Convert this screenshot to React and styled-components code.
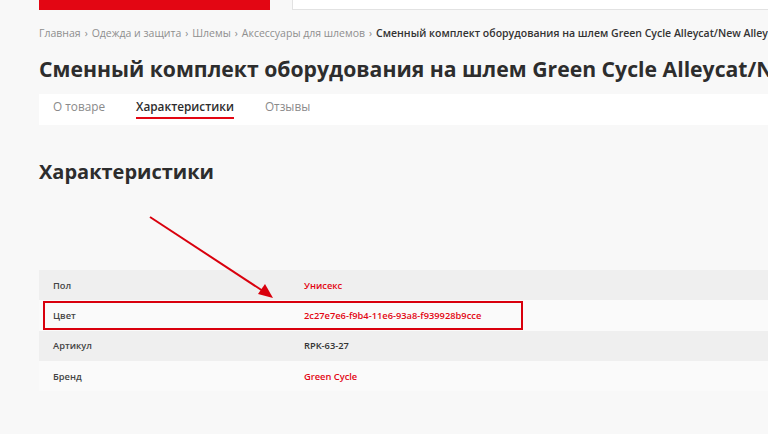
import React from "react";
import styled, { createGlobalStyle } from "styled-components";

const GlobalStyle = createGlobalStyle`
  html, body {
    margin: 0;
    padding: 0;
    background: #f8f8f8;
    overflow: hidden;
  }
  body {
    font-family: "Open Sans", "Liberation Sans", sans-serif;
    color: #333;
  }
`;

const Page = styled.div`
  position: relative;
  width: 768px;
  height: 434px;
  padding-left: 39px;
  box-sizing: border-box;
  overflow: hidden;
`;

const Header = styled.div`
  display: flex;
  gap: 22px;
  height: 10px;
`;

const RedBar = styled.div`
  width: 231px;
  background: #e30613;
`;

const Search = styled.div`
  flex: 1;
  background: #fff;
  border-left: 1px solid #e2e2e2;
  border-bottom: 1px solid #e2e2e2;
`;

const Crumbs = styled.div`
  margin-top: 16px;
  display: flex;
  align-items: center;
  gap: 4px;
  font-size: 10.5px;
  line-height: 14px;
  white-space: nowrap;
  overflow: hidden;
  color: #8f8f8f;
`;

const Crumb = styled.span`
  color: ${(p) => (p.$current ? "#333" : "#8f8f8f")};
  font-weight: ${(p) => (p.$current ? 600 : 400)};
`;

const Sep = styled.span`
  color: #888;
  font-size: 10px;
`;

const Title = styled.h1`
  margin: 14px 0 0;
  font-size: 21.2px;
  line-height: 30px;
  font-weight: 700;
  color: #2d2d2d;
  white-space: nowrap;
  overflow: hidden;
`;

const Tabs = styled.div`
  margin-top: 10px;
  height: 31px;
  background: #fff;
  display: flex;
  gap: 31px;
  padding-left: 14px;
`;

const Tab = styled.div`
  font-size: 11.8px;
  line-height: 14px;
  padding-top: 5px;
  font-weight: ${(p) => (p.$active ? 600 : 500)};
  color: ${(p) => (p.$active ? "#2d2d2d" : "#8a8a8a")};
  &::after {
    content: "";
    display: ${(p) => (p.$active ? "block" : "none")};
    height: 2px;
    background: #e30613;
    margin-top: 4px;
  }
`;

const Section = styled.h2`
  margin: 34px 0 0;
  font-size: 20px;
  line-height: 26px;
  font-weight: 700;
  color: #2d2d2d;
`;

const Table = styled.div`
  margin-top: 85px;
  display: flex;
  flex-direction: column;
`;

const Row = styled.div`
  display: grid;
  grid-template-columns: 251px 1fr;
  height: 30.3px;
  align-items: center;
  padding-left: 14px;
  background: ${(p) => (p.$shaded ? "#efefef" : "#fafafa")};
  font-size: 9.3px;
  font-weight: 600;
`;

const Label = styled.span`
  color: #444;
`;

const Value = styled.span`
  color: ${(p) => (p.$red ? "#e30613" : "#333")};
`;

const Highlight = styled.div`
  position: absolute;
  left: 43px;
  top: 301px;
  width: 480px;
  height: 29px;
  border: 2px solid #d9000d;
  box-sizing: border-box;
`;

const Arrow = styled.svg`
  position: absolute;
  left: 0;
  top: 0;
  pointer-events: none;
`;

const rows = [
  { label: "Пол", value: "Унисекс", red: true },
  { label: "Цвет", value: "2c27e7e6-f9b4-11e6-93a8-f939928b9cce", red: true },
  { label: "Артикул", value: "RPK-63-27" },
  { label: "Бренд", value: "Green Cycle", red: true },
];

const crumbs = [
  "Главная",
  "Одежда и защита",
  "Шлемы",
  "Аксессуары для шлемов",
];

export default function App() {
  return (
    <>
      <GlobalStyle />
      <Page>
        <Header>
          <RedBar />
          <Search />
        </Header>
        <Crumbs>
          {crumbs.map((c) => (
            <React.Fragment key={c}>
              <Crumb>{c}</Crumb>
              <Sep>›</Sep>
            </React.Fragment>
          ))}
          <Crumb $current>
            Сменный комплект оборудования на шлем Green Cycle Alleycat/New Alleycat
          </Crumb>
        </Crumbs>
        <Title>Сменный комплект оборудования на шлем Green Cycle Alleycat/New Alleycat</Title>
        <Tabs>
          <Tab>О товаре</Tab>
          <Tab $active>Характеристики</Tab>
          <Tab>Отзывы</Tab>
        </Tabs>
        <Section>Характеристики</Section>
        <Table>
          {rows.map((r, i) => (
            <Row key={r.label} $shaded={i % 2 === 0}>
              <Label>{r.label}</Label>
              <Value $red={r.red}>{r.value}</Value>
            </Row>
          ))}
        </Table>
        <Highlight />
        <Arrow width="768" height="434" viewBox="0 0 768 434">
          <line x1="150" y1="217" x2="266" y2="293" stroke="#d9000d" strokeWidth="2" />
          <path d="M273 298 L258 294 L265 284 Z" fill="#d9000d" />
        </Arrow>
      </Page>
    </>
  );
}
